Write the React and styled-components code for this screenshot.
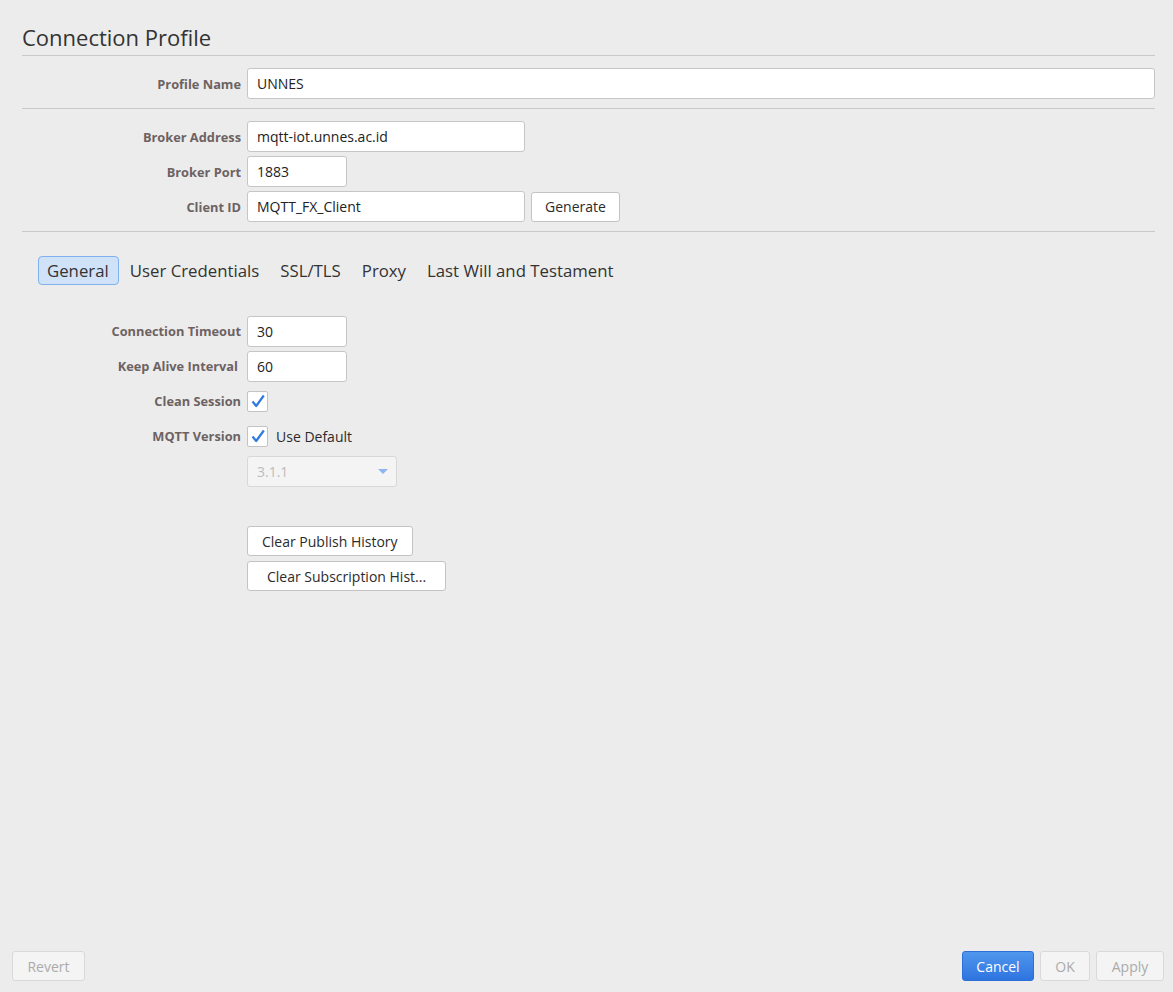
import React from 'react';
import styled, { createGlobalStyle } from 'styled-components';

const GlobalStyle = createGlobalStyle`
  html, body {
    margin: 0;
    padding: 0;
    background: #ececec;
  }
  * {
    box-sizing: border-box;
  }
  body {
    font-family: "Open Sans", "Noto Sans", sans-serif;
    color: #2b2b2b;
  }
`;

const Page = styled.div`
  height: 100vh;
  display: flex;
  flex-direction: column;
  background: #ececec;
`;

const Content = styled.div`
  flex: 1;
  padding: 0 18px 0 22px;
`;

const Title = styled.div`
  padding: 22px 0 3px;
  font-size: 22px;
  line-height: 30px;
  color: #333;
  border-bottom: 1px solid #c9c9c9;
`;

const Section = styled.div`
  display: flex;
  flex-direction: column;
  gap: 4px;
  padding: 12px 0 9px;
  border-bottom: 1px solid #c9c9c9;
`;

const Row = styled.div`
  display: flex;
  align-items: center;
  gap: 6px;
  height: ${(p) => p.h || 31}px;
`;

const Label = styled.div`
  width: 219px;
  flex-shrink: 0;
  text-align: right;
  padding-right: ${(p) => p.pr || 0}px;
  font-size: 12.8px;
  font-weight: 700;
  color: #6d6262;
  white-space: nowrap;
`;

const Input = styled.div`
  width: ${(p) => (p.w ? `${p.w}px` : 'auto')};
  flex: ${(p) => (p.w ? '0 0 auto' : '1')};
  height: 31px;
  display: flex;
  align-items: center;
  padding: 0 9px;
  background: #fff;
  border: 1px solid #c6c6c6;
  border-radius: 3px;
  font-size: 14px;
  color: #222;
`;

const Button = styled.div`
  height: 30px;
  display: inline-flex;
  align-items: center;
  justify-content: center;
  padding: 0 ${(p) => p.px || 14}px;
  background: #fff;
  border: 1px solid #c3c3c3;
  border-radius: 3px;
  font-size: 14px;
  color: #2b2b2b;
  white-space: nowrap;
`;

const Tabs = styled.div`
  display: flex;
  gap: 2px;
  margin: 24px 0 0 16px;
`;

const Tab = styled.div`
  height: 29px;
  display: flex;
  align-items: center;
  padding: 0 9px 0 8px;
  font-size: 16.8px;
  color: #333;
  border: 1px solid ${(p) => (p.active ? '#7eb1ee' : 'transparent')};
  background: ${(p) => (p.active ? '#cfe2f8' : 'transparent')};
  border-radius: 4px;
`;

const General = styled.div`
  display: flex;
  flex-direction: column;
  gap: 5px;
  margin-top: 31px;
`;

const CheckBox = styled.div`
  width: 21px;
  height: 21px;
  flex-shrink: 0;
  display: flex;
  align-items: center;
  justify-content: center;
  background: #fff;
  border: 1px solid #c3c3c3;
  border-radius: 2px;
`;

const CheckText = styled.span`
  font-size: 14px;
  color: #2b2b2b;
  margin-left: 2px;
`;

const Combo = styled.div`
  width: 150px;
  height: 31px;
  display: flex;
  align-items: center;
  justify-content: space-between;
  padding: 0 8px 0 9px;
  background: #f4f4f4;
  border: 1px solid #d8d8d8;
  border-radius: 3px;
  font-size: 14px;
  color: #bcbcbc;
`;

const Arrow = styled.span`
  width: 0;
  height: 0;
  border-left: 5px solid transparent;
  border-right: 5px solid transparent;
  border-top: 5px solid #8db5f0;
`;

const ActionStack = styled.div`
  display: flex;
  flex-direction: column;
  align-items: flex-start;
  gap: 5px;
  margin: 40px 0 0 225px;
`;

const Footer = styled.div`
  display: flex;
  justify-content: space-between;
  align-items: center;
  padding: 0 9px 11px 12px;
`;

const FooterGroup = styled.div`
  display: flex;
  gap: 6px;
`;

const FooterButton = styled.div`
  height: 30px;
  width: ${(p) => p.w}px;
  display: flex;
  align-items: center;
  justify-content: center;
  font-size: 14px;
  border-radius: 3px;
  border: 1px solid ${(p) => (p.primary ? '#2c6fd6' : '#d9d9d9')};
  background: ${(p) => (p.primary ? 'linear-gradient(#5097ee, #2e74e0)' : '#f4f4f4')};
  color: ${(p) => (p.primary ? '#fff' : '#ababab')};
`;

const Check = () => (
  <svg width="16" height="16" viewBox="0 0 16 16">
    <path d="M2.5 8.5 L6.2 13 L13.8 2.5" fill="none" stroke="#2f7be0" strokeWidth="2.2" strokeLinejoin="round" />
  </svg>
);

const tabs = ['General', 'User Credentials', 'SSL/TLS', 'Proxy', 'Last Will and Testament'];

export default function App() {
  return (
    <>
      <GlobalStyle />
      <Page>
        <Content>
          <Title>Connection Profile</Title>

          <Section>
            <Row>
              <Label>Profile Name</Label>
              <Input>UNNES</Input>
            </Row>
          </Section>

          <Section>
            <Row>
              <Label>Broker Address</Label>
              <Input w={278}>mqtt-iot.unnes.ac.id</Input>
            </Row>
            <Row>
              <Label>Broker Port</Label>
              <Input w={100}>1883</Input>
            </Row>
            <Row>
              <Label>Client ID</Label>
              <Input w={278}>MQTT_FX_Client</Input>
              <Button px={13}>Generate</Button>
            </Row>
          </Section>

          <Tabs>
            {tabs.map((t, i) => (
              <Tab key={t} active={i === 0}>{t}</Tab>
            ))}
          </Tabs>

          <General>
            <Row h={30}>
              <Label>Connection Timeout</Label>
              <Input w={100}>30</Input>
            </Row>
            <Row h={30}>
              <Label pr={3}>Keep Alive Interval</Label>
              <Input w={100}>60</Input>
            </Row>
            <Row h={30}>
              <Label>Clean Session</Label>
              <CheckBox><Check /></CheckBox>
            </Row>
            <Row h={30}>
              <Label>MQTT Version</Label>
              <CheckBox><Check /></CheckBox>
              <CheckText>Use Default</CheckText>
            </Row>
            <Row h={30}>
              <Label />
              <Combo>
                3.1.1
                <Arrow />
              </Combo>
            </Row>
          </General>

          <ActionStack>
            <Button>Clear Publish History</Button>
            <Button px={19}>Clear Subscription Hist...</Button>
          </ActionStack>
        </Content>

        <Footer>
          <FooterButton w={73}>Revert</FooterButton>
          <FooterGroup>
            <FooterButton w={72} primary>Cancel</FooterButton>
            <FooterButton w={50}>OK</FooterButton>
            <FooterButton w={68}>Apply</FooterButton>
          </FooterGroup>
        </Footer>
      </Page>
    </>
  );
}
